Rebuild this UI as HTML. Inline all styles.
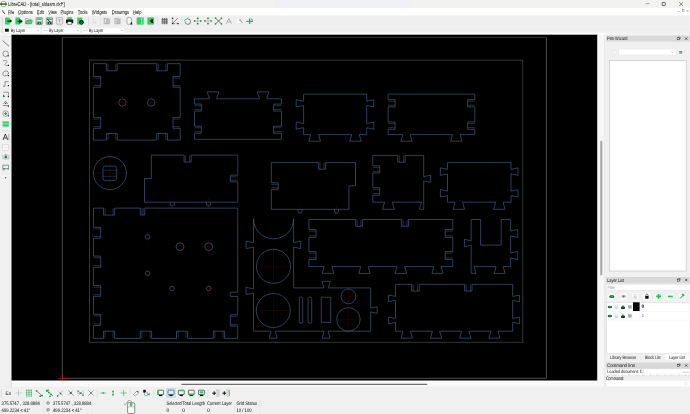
<!DOCTYPE html>
<html><head><meta charset="utf-8"><title>LibreCAD</title>
<style>
html,body{margin:0;padding:0;background:#f0f0f0;width:690px;height:414px;overflow:hidden}
svg{display:block;font-family:"Liberation Sans",sans-serif;text-rendering:geometricPrecision}
body{will-change:transform;transform:translateZ(0)}
</style></head>
<body>
<svg width="690" height="414" viewBox="0 0 690 414">
<defs><linearGradient id="tb" x1="0" x2="1" y1="0" y2="0"><stop offset="0" stop-color="#f6f6fa"/><stop offset="0.55" stop-color="#f3f3f6"/><stop offset="1" stop-color="#efefef"/></linearGradient></defs>
<rect x="0" y="0" width="690" height="414" fill="#f0f0f0" />
<rect x="0" y="0" width="690" height="7.9" fill="#f2f2f0" />
<rect x="275" y="0" width="137" height="7.9" fill="#eef0f6" />
<rect x="1.1" y="1.6" width="4.9" height="4.9" rx="1.5" fill="#fdfdfd" stroke="#72cf22" stroke-width="1.0"/>
<rect x="0.2" y="3.4" width="6.5" height="1.4" fill="#2a2a42" />
<rect x="2.6" y="3.5" width="1.9" height="1.2" fill="#8088a4" />
<text x="8.1" y="6.0" font-size="5.59" fill="#111" stroke="#111" stroke-width="0.02" textLength="56.6" lengthAdjust="spacingAndGlyphs" >LibreCAD - [total_sldasm.dxf*]</text>
<line x1="645.6" y1="3.6" x2="649.4" y2="3.6" stroke="#333" stroke-width="0.4" />
<rect x="662.2" y="2.4" width="3.2" height="3.2" rx="0.8" fill="none" stroke="#222" stroke-width="0.7"/>
<path d="M679.2,2.2 L683,6 M683,2.2 L679.2,6" stroke="#222" stroke-width="0.5" fill="none"/>
<rect x="0" y="7.9" width="690" height="7.7" fill="#ffffff" />
<path d="M3.2,10.0 A1.9,1.9 0 1 0 2.4,13.2" fill="none" stroke="#d0d0d0" stroke-width="0.5"/>
<path d="M2.8,10.7 C3.0,12.2 3.6,13.0 4.7,13.5" fill="none" stroke="#111" stroke-width="0.95" stroke-linecap="round"/>
<text x="8.0" y="13.8" font-size="5.47" fill="#000" stroke="#000" stroke-width="0.02" textLength="6.1" lengthAdjust="spacingAndGlyphs" >File</text>
<line x1="8.0" y1="14.6" x2="10.4" y2="14.6" stroke="#333" stroke-width="0.35" />
<text x="18.0" y="13.8" font-size="5.47" fill="#000" stroke="#000" stroke-width="0.02" textLength="15.0" lengthAdjust="spacingAndGlyphs" >Options</text>
<line x1="18.0" y1="14.6" x2="20.4" y2="14.6" stroke="#333" stroke-width="0.35" />
<text x="37.0" y="13.8" font-size="5.47" fill="#000" stroke="#000" stroke-width="0.02" textLength="6.9" lengthAdjust="spacingAndGlyphs" >Edit</text>
<line x1="37.0" y1="14.6" x2="39.4" y2="14.6" stroke="#333" stroke-width="0.35" />
<text x="48.3" y="13.8" font-size="5.47" fill="#000" stroke="#000" stroke-width="0.02" textLength="8.7" lengthAdjust="spacingAndGlyphs" >View</text>
<line x1="48.3" y1="14.6" x2="50.699999999999996" y2="14.6" stroke="#333" stroke-width="0.35" />
<text x="60.6" y="13.8" font-size="5.47" fill="#000" stroke="#000" stroke-width="0.02" textLength="12.9" lengthAdjust="spacingAndGlyphs" >Plugins</text>
<line x1="60.6" y1="14.6" x2="63.0" y2="14.6" stroke="#333" stroke-width="0.35" />
<text x="77.8" y="13.8" font-size="5.47" fill="#000" stroke="#000" stroke-width="0.02" textLength="9.8" lengthAdjust="spacingAndGlyphs" >Tools</text>
<line x1="77.8" y1="14.6" x2="80.2" y2="14.6" stroke="#333" stroke-width="0.35" />
<text x="91.8" y="13.8" font-size="5.47" fill="#000" stroke="#000" stroke-width="0.02" textLength="15.4" lengthAdjust="spacingAndGlyphs" >Widgets</text>
<line x1="91.8" y1="14.6" x2="94.2" y2="14.6" stroke="#333" stroke-width="0.35" />
<text x="111.8" y="13.8" font-size="5.47" fill="#000" stroke="#000" stroke-width="0.02" textLength="17.4" lengthAdjust="spacingAndGlyphs" >Drawings</text>
<line x1="111.8" y1="14.6" x2="114.2" y2="14.6" stroke="#333" stroke-width="0.35" />
<text x="133.1" y="13.8" font-size="5.47" fill="#000" stroke="#000" stroke-width="0.02" textLength="8.4" lengthAdjust="spacingAndGlyphs" >Help</text>
<line x1="133.1" y1="14.6" x2="135.5" y2="14.6" stroke="#333" stroke-width="0.35" />
<line x1="677.6" y1="11.6" x2="679.6" y2="11.6" stroke="#4a6a9a" stroke-width="0.4" />
<rect x="682.2" y="9.6" width="1.8" height="1.8" fill="none" stroke="#4a6a9a" stroke-width="0.4"/>
<path d="M686.6,10 L688.6,12 M688.6,10 L686.6,12" stroke="#4a6a9a" stroke-width="0.4"/>
<rect x="0" y="15.6" width="690" height="10.4" fill="#efefef" />
<rect x="0" y="25.7" width="690" height="0.7" fill="#e6e6e6" />
<rect x="0" y="26.4" width="690" height="0.6" fill="#f7f7f7" />
<line x1="2.2" y1="17" x2="2.2" y2="25" stroke="#c8c8c8" stroke-width="0.5" />
<rect x="5.0" y="17.5" width="4.7" height="7.1" fill="#14e05a" rx="0.4"/>
<path d="M7.4,20.4 H9.8 V19.2 L12.2,21.1 L9.8,23 V21.8 H7.4 Z" fill="#111"/>
<rect x="15.4" y="17.5" width="4.4" height="7.1" fill="#14e05a" rx="0.4"/>
<path d="M17.6,21.4 H22.2 M19.9,19.3 V23.5" stroke="#111" stroke-width="1.3"/>
<path d="M20.6,19.6 L22.6,21.4 L20.6,23.2 Z" fill="#111"/>
<path d="M25.6,18.6 H27.8 L28.4,19.4 H31.2 V20.6 H26.6 L25.6,23.6 Z" fill="#fafafa" stroke="#2a6a3a" stroke-width="0.45"/>
<path d="M26.9,20.7 H32.6 L31.2,23.9 H25.7 Z" fill="#35e878" stroke="#1a6a32" stroke-width="0.4"/>
<rect x="36.1" y="17.7" width="6.2" height="6.9" fill="#f2f2f2" rx="0.6" stroke="#444" stroke-width="0.5"/>
<rect x="36.7" y="18.3" width="5.0" height="1.8" fill="#14e05a" />
<rect x="36.7" y="21.4" width="5.0" height="2.7" fill="#14e05a" />
<rect x="37.7" y="22.2" width="3.0" height="2.0" fill="#2a2a2a" />
<rect x="38.900000000000006" y="22.5" width="0.8" height="1.5" fill="#e8e8e8" />
<rect x="46.3" y="17.7" width="6.2" height="6.9" fill="#f2f2f2" rx="0.6" stroke="#444" stroke-width="0.5"/>
<rect x="46.9" y="18.3" width="5.0" height="1.8" fill="#14e05a" />
<rect x="46.9" y="21.4" width="5.0" height="2.7" fill="#14e05a" />
<rect x="47.9" y="22.2" width="3.0" height="2.0" fill="#2a2a2a" />
<rect x="49.1" y="22.5" width="0.8" height="1.5" fill="#e8e8e8" />
<path d="M47.2,18.8 L51.6,23.4" stroke="#1b1b1b" stroke-width="1.0"/>
<rect x="56.4" y="17.6" width="6.2" height="6.6" fill="#f4f4f4" rx="0.6" stroke="#777" stroke-width="0.45"/>
<line x1="57.4" y1="19.4" x2="61.6" y2="19.4" stroke="#888" stroke-width="0.5" />
<line x1="57.4" y1="21.0" x2="61.6" y2="21.0" stroke="#aaa" stroke-width="0.5" />
<line x1="59.5" y1="19.4" x2="59.5" y2="23.4" stroke="#888" stroke-width="0.5" />
<rect x="67.4" y="17.2" width="4.4" height="2.6" fill="#14e05a" />
<rect x="66.0" y="19.6" width="7.2" height="3.6" fill="#111" rx="0.6"/>
<rect x="67.4" y="21.8" width="4.4" height="2.6" fill="#f2f2f2" stroke="#111" stroke-width="0.4"/>
<rect x="77.2" y="17.4" width="5.0" height="7.2" fill="#14e05a" rx="0.4"/>
<circle cx="81.4" cy="22.3" r="2.4" fill="#111"/>
<path d="M81.4,20.9 V23.4 M80.3,22.4 L81.4,23.6 L82.5,22.4" stroke="#14e05a" stroke-width="0.6" fill="none"/>
<line x1="88.6" y1="17" x2="88.6" y2="25" stroke="#d0d0d0" stroke-width="0.5" />
<path d="M93.4,19.0 L93.4,22.8 L94.4,22.0 L95.1,23.6 L95.7,23.3 L95.0,21.8 L96.2,21.7 Z" fill="#fbfbfb" stroke="#b4b4b4" stroke-width="0.3"/>
<line x1="100.6" y1="17" x2="100.6" y2="25" stroke="#d6d6d6" stroke-width="0.5" />
<rect x="103.3" y="17.7" width="7.0" height="6.8" fill="#d4d4d4" rx="0.5"/>
<rect x="104.39999999999999" y="18.6" width="3.2" height="4.6" fill="#e2e2e2" stroke="#9c9c9c" stroke-width="0.4"/>
<rect x="106.2" y="19.8" width="3.0" height="3.8" fill="#c2c2c2" stroke="#9c9c9c" stroke-width="0.4"/>
<rect x="114.0" y="17.7" width="7.0" height="6.8" fill="#d4d4d4" rx="0.5"/>
<rect x="115.1" y="18.6" width="3.2" height="4.6" fill="#e2e2e2" stroke="#9c9c9c" stroke-width="0.4"/>
<rect x="116.9" y="19.8" width="3.0" height="3.8" fill="#c2c2c2" stroke="#9c9c9c" stroke-width="0.4"/>
<rect x="127.0" y="17.7" width="4.4" height="6.4" fill="#fdfdfd" rx="0.5" stroke="#555" stroke-width="0.45"/>
<path d="M130.2,24.4 L131.4,21.4 L132.6,24.4 Z" fill="#222"/>
<rect x="136.8" y="17.6" width="6.8" height="6.8" fill="#14e05a" rx="0.4" stroke="#c08a9a" stroke-width="0.3"/>
<rect x="141.0" y="18.2" width="1.1" height="5.4" fill="#f2f2f2" />
<rect x="147.4" y="17.6" width="6.6" height="6.8" fill="#14e05a" rx="0.4" stroke="#c08a9a" stroke-width="0.3"/>
<path d="M152.2,19.0 L149.6,21.0 L152.2,23.0 Z" fill="#111"/>
<rect x="151.6" y="19.0" width="1.4" height="4.0" fill="#222" />
<line x1="157.6" y1="17" x2="157.6" y2="25" stroke="#d6d6d6" stroke-width="0.5" />
<path d="M161.4,19.3 H168 M161.4,21.1 H168 M161.4,22.9 H168 M162.8,17.9 V24.3 M164.7,17.9 V24.3 M166.6,17.9 V24.3" stroke="#2a2a2a" stroke-width="0.6"/>
<path d="M172.6,18.2 V23.6 M172.6,23.6 H178.2" stroke="#222" stroke-width="0.5" stroke-dasharray="0.9 0.6" fill="none"/>
<path d="M172.8,23.2 L177.8,18.2" stroke="#1fb860" stroke-width="0.9"/>
<rect x="171.9" y="22.9" width="1.3" height="1.3" fill="#222" />
<rect x="177.4" y="22.9" width="1.3" height="1.3" fill="#222" />
<rect x="171.9" y="17.6" width="1.3" height="1.3" fill="#222" />
<line x1="181.8" y1="17" x2="181.8" y2="25" stroke="#d6d6d6" stroke-width="0.5" />
<path d="M185.2,21.4 A2.7,2.7 0 1 0 187.8,19.0" stroke="#333" stroke-width="0.55" fill="none"/>
<path d="M184.2,20.6 L188.4,17.6" stroke="#1fb860" stroke-width="0.9"/>
<path d="M195.1,21 H200.29999999999998 M197.7,18.4 V23.6" stroke="#9a9a9a" stroke-width="0.5"/>
<rect x="196.95" y="17.55" width="1.5" height="1.5" fill="#0a8a3a" />
<rect x="196.95" y="22.95" width="1.5" height="1.5" fill="#0a8a3a" />
<rect x="193.95" y="20.25" width="1.5" height="1.5" fill="#0a8a3a" />
<rect x="199.95" y="20.25" width="1.5" height="1.5" fill="#0a8a3a" />
<path d="M205.4,21 H210.6 M208.0,18.4 V23.6" stroke="#9a9a9a" stroke-width="0.5"/>
<rect x="207.25" y="17.55" width="1.5" height="1.5" fill="#0a8a3a" />
<rect x="207.25" y="22.95" width="1.5" height="1.5" fill="#0a8a3a" />
<rect x="204.25" y="20.25" width="1.5" height="1.5" fill="#0a8a3a" />
<rect x="210.25" y="20.25" width="1.5" height="1.5" fill="#0a8a3a" />
<path d="M215.8,18.4 L221.2,23.6 M221.2,18.4 L215.8,23.6" stroke="#222" stroke-width="0.6"/>
<rect x="214.8" y="17.4" width="1.4" height="1.4" fill="#0a8a3a" />
<rect x="220.8" y="17.4" width="1.4" height="1.4" fill="#0a8a3a" />
<rect x="214.8" y="23.2" width="1.4" height="1.4" fill="#0a8a3a" />
<rect x="220.8" y="23.2" width="1.4" height="1.4" fill="#0a8a3a" />
<path d="M226.2,23.6 L228.9,18.6 L231.6,23.6 M227.8,21.4 L228.9,22.6 L230,21.4" stroke="#6a6a6a" stroke-width="0.5" fill="none"/>
<rect x="236.2" y="18.2" width="5.2" height="5.2" fill="#fdfdfd" stroke="#dadada" stroke-width="0.35"/>
<path d="M239.6,19.6 L242.4,22.8 M240.6,19.2 L239.2,20.6" stroke="#333" stroke-width="0.5"/>
<path d="M246.4,21.4 H253 M249.6,18.4 V24" stroke="#1fb860" stroke-width="1.3"/>
<path d="M250.8,18.6 L252.8,20.2" stroke="#222" stroke-width="0.6"/>
<rect x="0" y="27.0" width="690" height="5.8" fill="#efefef" />
<rect x="0" y="32.7" width="605" height="2.0" fill="#fdfdfd" />
<rect x="605" y="32.7" width="85" height="2.0" fill="#f3f3f3" />
<line x1="2.2" y1="27.6" x2="2.2" y2="33.4" stroke="#c8c8c8" stroke-width="0.5" />
<rect x="3.6" y="27.5" width="37.199999999999996" height="5.7" fill="#ffffff" stroke="#e4e4e4" stroke-width="0.4"/>
<path d="M37.199999999999996,29.9 L38.3,31 L39.4,29.9" stroke="#8a8a8a" stroke-width="0.4" fill="none"/>
<rect x="41.9" y="27.5" width="38.50000000000001" height="5.7" fill="#ffffff" stroke="#e4e4e4" stroke-width="0.4"/>
<path d="M76.80000000000001,29.9 L77.9,31 L79.0,29.9" stroke="#8a8a8a" stroke-width="0.4" fill="none"/>
<rect x="81.6" y="27.5" width="43.0" height="5.7" fill="#ffffff" stroke="#e4e4e4" stroke-width="0.4"/>
<path d="M121.0,29.9 L122.1,31 L123.19999999999999,29.9" stroke="#8a8a8a" stroke-width="0.4" fill="none"/>
<rect x="5.0" y="28.7" width="3.8" height="3.0" fill="#111" />
<text x="10.8" y="31.9" font-size="4.9" fill="#1a1a1a" stroke="#1a1a1a" stroke-width="0.02" textLength="14.4" lengthAdjust="spacingAndGlyphs" >By Layer</text>
<line x1="43.6" y1="30.4" x2="47.6" y2="30.4" stroke="#888" stroke-width="0.4" />
<text x="49.0" y="31.9" font-size="4.9" fill="#1a1a1a" stroke="#1a1a1a" stroke-width="0.02" textLength="14.4" lengthAdjust="spacingAndGlyphs" >By Layer</text>
<line x1="83.2" y1="30.4" x2="87.2" y2="30.4" stroke="#888" stroke-width="0.4" />
<text x="88.8" y="31.9" font-size="4.9" fill="#1a1a1a" stroke="#1a1a1a" stroke-width="0.02" textLength="14.4" lengthAdjust="spacingAndGlyphs" >By Layer</text>
<rect x="11.3" y="34.7" width="586.3" height="346.1" fill="#000" />
<g fill="none" stroke="#6a6a6a" stroke-width="0.7">
<path d="M62.3,37.4 V378.3 H546.4 V37.4"/>
<path d="M62.3,37.3 H546.4" stroke-opacity="0.7"/>
</g>
<g fill="none" stroke="#4c4c4c" stroke-width="0.7">
<rect x="89.4" y="60.1" width="433.4" height="282.1"/>
</g>
<line x1="58" y1="378.3" x2="67" y2="378.3" stroke="#d01010" stroke-width="0.7" />
<line x1="62.3" y1="374" x2="62.3" y2="381" stroke="#d01010" stroke-width="0.7" />
<g fill="none" stroke="#420808" stroke-width="0.4">
<path d="M116.4,102.5 H128.4 M122.4,96.5 V108.5"/>
<path d="M145.2,102.5 H157.2 M151.2,96.5 V108.5"/>
<path d="M91.4,173.1 H128.4 M109.9,154.6 V191.6"/>
<path d="M143.1,236.9 H152.1 M147.6,232.4 V241.4"/>
<path d="M143.1,273.3 H152.1 M147.6,268.8 V277.8"/>
<path d="M167.6,288.5 H176.6 M172.1,284.0 V293.0"/>
<path d="M204.2,288.5 H213.2 M208.7,284.0 V293.0"/>
<path d="M173.5,246.7 H186.5 M180,240.2 V253.2"/>
<path d="M202.2,246.7 H215.2 M208.7,240.2 V253.2"/>
<path d="M254.5,266.3 H292.5 M273.5,247.3 V285.3"/>
<path d="M254.3,310.5 H292.3 M273.3,291.5 V329.5"/>
<path d="M338.9,296.4 H357.9 M348.4,286.9 V305.9"/>
<path d="M334.4,319.4 H362.4 M348.4,305.4 V333.4"/>
<path d="M172.2,198.2 V208.2"/>
<path d="M208.6,198.2 V208.2"/>
<path d="M300.1,205.3 V215.3"/>
<path d="M336.5,205.3 V215.3"/>
</g>
<g fill="none" stroke="#44668f" stroke-width="0.62" stroke-linejoin="round">
<path d="M93.5,63.65 H106.4 V70.8 H117.3 V63.65 H156.7 V70.8 H167.4 V63.65 H180.2 V76.4 H173 V87.2 H180.2 V117.4 H173 V128.3 H180.2 V140.1 H167.4 V133.5 H156.7 V140.1 H117.3 V133.5 H106.4 V140.1 H93.5 V128.3 H100.7 V117.4 H93.5 V87.2 H100.7 V76.4 H93.5 Z"/>
<path d="M194.5,98.8 H209.6 L207.1,91.9 H219 L216.5,98.8 H259.5 L257.2,91.9 H268.9 L266.6,98.8 H281.5 V104.1 H273.6 V111.1 H281.5 V126.2 H273.6 V133.3 H281.5 V139.3 H194.5 V133.3 H201.4 V126.2 H194.5 V111.1 H201.4 V104.1 H194.5 Z"/>
<path d="M303.6,94.1 H366.7 V101.3 L373.8,99.8 V106.9 L366.7,105.4 V123.5 L373.8,122 V129.2 L366.7,127.7 V134.6 H359.3 L361.2,141.2 H349.7 L351.8,134.6 H318.6 L320.5,141.2 H308.8 L310.7,134.6 H303.6 V127.7 L296.2,129.2 V122 L303.6,123.5 V105.4 L296.2,106.9 V99.8 L303.6,101.3 Z"/>
<path d="M388.1,94.1 H474.8 V99.6 H467.6 V106.9 H474.8 V122 H467.6 V129.3 H474.8 V134.6 H460.1 L462,141.2 H450.7 L452.5,134.6 H410.1 L412,141.2 H400.7 L403,134.6 H388.1 V129.3 H395.1 V122 H388.1 V106.9 H395.1 V99.6 H388.1 Z"/>
<path d="M151.3,155.1 H184.1 V162 H191.2 V155.1 H237.8 V175.2 H230.4 V181.8 H237.8 V202.2 H144.5 V178.6 H151.3 Z"/>
<path d="M271.3,162.6 H318.4 V169.2 H325.7 V162.6 H355.5 V185.8 H348.9 V209.3 H271.3 V189.4 H278.3 V182.8 H271.3 Z"/>
<path d="M372.8,155.4 H397.7 V162.2 H405.2 V155.4 H423.7 V176.7 L430.7,175.2 V182.4 L423.7,180.9 V209.3 H419.5 L421.4,202.2 H392.4 L394.3,209.3 H382.6 L384.5,202.2 H372.8 V195.2 H379.8 V187.7 H372.8 V173 H379.8 V165.8 H372.8 Z"/>
<path d="M447.5,162.6 H511 V169.4 L518,167.9 V175.4 L511,173.9 V191.1 L518,189.6 V197.1 L511,195.6 V202.2 H503.1 L505,209.3 H493.7 L495.6,202.2 H462.6 L464.5,209.3 H453.2 L455.1,202.2 H447.5 V195.6 L440.4,197.1 V189.6 L447.5,191.1 V173.9 L440.4,175.4 V167.9 L447.5,169.4 Z"/>
<path d="M93.5,208.1 H103.5 V215.1 H114.6 V208.1 H140.3 V215.1 H144.8 V208.1 H237.7 V292.2 H230.3 V296.4 H237.7 V314.7 H230.3 V326 H237.7 V338.4 H224.6 V331.2 H213.3 V338.4 H187.6 V331.2 H176.5 V338.4 H151.6 V331.2 H140.3 V338.4 H114.6 V331.2 H103.5 V338.4 H93.5 V325.6 H100.7 V314.3 H93.5 V296.4 H100.7 V285.6 H93.5 V267.3 H100.7 V256.1 H93.5 V238.2 H100.7 V227.3 H93.5 Z"/>
<path d="M253.5,218.8 A20.05,20.05 0 0 0 293.6,218.8 V242.6 L300.6,241.1 V248.6 L293.6,247.1 V287.9 H323.9 L322.1,281.3 H330.2 L328.5,287.9 H370.7 V308.2 L377.2,306.7 V313.3 L370.7,311.8 V331.2 H328.2 L330.1,338.2 H322.2 L324.1,331.2 H275.3 L277.1,338.2 H269.2 L271.1,331.2 H253.5 V293 L246,294.5 V287.3 L253.5,288.8 V247.1 L246.1,248.6 V241.1 L253.5,242.6 Z"/>
<path d="M308.9,219.5 H355.6 V226.3 H362.6 V219.5 H401.4 V226.3 H408.6 V219.5 H452.8 V229.5 H445.2 V237.4 H452.8 V251.5 H445.2 V259.6 H452.8 V266.6 H441.1 L443,273.4 H432 L433.9,266.6 H404.6 L406.7,273.4 H395.1 L397,266.6 H368.2 L370.1,273.4 H358.8 L360.7,266.6 H332 L333.9,273.4 H322.2 L324.1,266.6 H308.9 V259.6 H316 V251.5 H308.9 V237.4 H316 V229.5 H308.9 Z"/>
<path d="M471.2,219.5 H480.6 V245.1 H501.2 V219.5 H510.6 V231 L517.8,229.5 V237.4 L510.6,235.9 V253 L517.8,251.5 V259.6 L510.6,258.1 V266.6 H503.2 L505.1,273.4 H494.2 L496.1,266.6 H474 L475.9,273.4 H471.2 V245.3 L464.4,246.8 V239.3 L471.2,240.8 Z"/>
<path d="M395.5,284.3 H411.6 V291.1 H419.3 V284.3 H464.6 V291.1 H472 V284.3 H512.7 V296.4 L519.6,295.1 V301.7 L512.7,300.4 V318.4 L519.6,317.1 V323.7 L512.7,322.4 V331.2 H498 L499.9,338.2 H488.9 L491,331.2 H468.8 L471,338.2 H459.7 L461.6,331.2 H439.6 L441.8,338.2 H430.5 L432.4,331.2 H410.5 L412.5,338.2 H401.1 L402.9,331.2 H395.5 V322.4 L388.6,323.7 V317.1 L395.5,318.4 V300.4 L388.6,301.7 V295.1 L395.5,296.4 Z"/>
<path d="M170.2,202.2 V204.0 A2,2 0 0 0 174.2,204.0 V202.2"/>
<path d="M206.6,202.2 V204.0 A2,2 0 0 0 210.6,204.0 V202.2"/>
<path d="M298.1,209.3 V211.10000000000002 A2,2 0 0 0 302.1,211.10000000000002 V209.3"/>
<path d="M334.5,209.3 V211.10000000000002 A2,2 0 0 0 338.5,211.10000000000002 V209.3"/>
<path d="M93.5,78.0 H100.7 M93.5,85.60000000000001 H100.7 M180.2,78.0 H173 M180.2,85.60000000000001 H173 M93.5,119.0 H100.7 M93.5,126.70000000000002 H100.7 M180.2,119.0 H173 M180.2,126.70000000000002 H173 M108.0,63.65 V70.8 M115.7,63.65 V70.8 M108.0,140.1 V133.5 M115.7,140.1 V133.5 M158.29999999999998,63.65 V70.8 M165.8,63.65 V70.8 M158.29999999999998,140.1 V133.5 M165.8,140.1 V133.5 M194.5,105.69999999999999 H201.4 M194.5,109.5 H201.4 M281.5,105.69999999999999 H273.6 M281.5,109.5 H273.6 M194.5,127.8 H201.4 M194.5,131.70000000000002 H201.4 M281.5,127.8 H273.6 M281.5,131.70000000000002 H273.6 M388.1,101.19999999999999 H395.1 M388.1,105.30000000000001 H395.1 M474.8,101.19999999999999 H467.6 M474.8,105.30000000000001 H467.6 M388.1,123.6 H395.1 M388.1,127.70000000000002 H395.1 M474.8,123.6 H467.6 M474.8,127.70000000000002 H467.6 M185.7,155.1 V162 M189.6,155.1 V162 M237.8,176.79999999999998 H230.4 M237.8,180.20000000000002 H230.4 M320.0,162.6 V169.2 M324.09999999999997,162.6 V169.2 M271.3,184.4 H278.3 M271.3,187.8 H278.3 M399.3,155.4 V162.2 M403.59999999999997,155.4 V162.2 M372.8,167.4 H379.8 M372.8,171.4 H379.8 M372.8,189.29999999999998 H379.8 M372.8,193.6 H379.8 M93.5,228.9 H100.7 M93.5,236.6 H100.7 M93.5,257.70000000000005 H100.7 M93.5,265.7 H100.7 M93.5,287.20000000000005 H100.7 M93.5,294.79999999999995 H100.7 M93.5,315.90000000000003 H100.7 M93.5,324.0 H100.7 M237.7,316.3 H230.3 M237.7,324.4 H230.3 M105.1,208.1 V215.1 M113.0,208.1 V215.1 M141.9,208.1 V215.1 M143.20000000000002,208.1 V215.1 M105.1,338.4 V331.2 M113.0,338.4 V331.2 M141.9,338.4 V331.2 M150.0,338.4 V331.2 M178.1,338.4 V331.2 M186.0,338.4 V331.2 M214.9,338.4 V331.2 M223.0,338.4 V331.2 M308.9,231.1 H316 M308.9,235.8 H316 M452.8,231.1 H445.2 M452.8,235.8 H445.2 M308.9,253.1 H316 M308.9,258.0 H316 M452.8,253.1 H445.2 M452.8,258.0 H445.2 M357.20000000000005,219.5 V226.3 M361.0,219.5 V226.3 M403.0,219.5 V226.3 M407.0,219.5 V226.3 M413.20000000000005,284.3 V291.1 M417.7,284.3 V291.1 M466.20000000000005,284.3 V291.1 M470.4,284.3 V291.1" stroke-opacity="0.75"/>
<circle cx="122.4" cy="102.5" r="3.7"/>
<circle cx="151.2" cy="102.5" r="3.7"/>
<circle cx="109.9" cy="173.1" r="16.5"/>
<circle cx="147.6" cy="236.9" r="2.3"/>
<circle cx="147.6" cy="273.3" r="2.3"/>
<circle cx="172.1" cy="288.5" r="2.3"/>
<circle cx="208.7" cy="288.5" r="2.3"/>
<circle cx="180" cy="246.7" r="3.9"/>
<circle cx="208.7" cy="246.7" r="3.9"/>
<circle cx="273.5" cy="266.3" r="17.05"/>
<circle cx="273.3" cy="310.5" r="17.0"/>
<circle cx="348.4" cy="296.4" r="7.4"/>
<circle cx="348.4" cy="319.4" r="11.8"/>
<rect x="103" y="166.1" width="13.7" height="14.5" rx="2.2"/>
<path d="M103,170.3 H116.7 M103,176.3 H116.7" stroke-opacity="0.6"/>
<rect x="299.3" y="296.9" width="3.4" height="26.4" rx="1.7"/>
<rect x="308.1" y="296.9" width="3.6" height="26.4" rx="1.7"/>
<rect x="321.3" y="297.3" width="9.4" height="25.1"/>
</g>
<rect x="0" y="34.6" width="11.3" height="352.6" fill="#f0f0f0" />
<line x1="2" y1="36.6" x2="9.6" y2="36.6" stroke="#cfcfcf" stroke-width="0.4" />
<path d="M2.6,40.6 L9,46.2" stroke="#222" stroke-width="0.55"/>
<circle cx="5.6" cy="53.8" r="2.8" fill="none" stroke="#444" stroke-width="0.5"/>
<rect x="7.6" y="55.2" width="1.2" height="1.2" fill="#222" />
<path d="M3,61 C6,59.6 8.6,61 6,63 C3.6,64.8 6,66.4 8.6,65.2" fill="none" stroke="#444" stroke-width="0.5"/>
<rect x="7.8" y="64.8" width="1.2" height="1.2" fill="#222" />
<ellipse cx="5.6" cy="73.4" rx="3" ry="2.3" fill="none" stroke="#444" stroke-width="0.5" transform="rotate(-25 5.6 73.4)"/>
<rect x="7.8" y="75.0" width="1.2" height="1.2" fill="#222" />
<path d="M3,86.4 H5 V81.6 H8.6" fill="none" stroke="#444" stroke-width="0.55"/>
<rect x="7.8" y="85.0" width="1.2" height="1.2" fill="#222" />
<path d="M3.2,92.2 H8.4 V96.4" fill="none" stroke="#444" stroke-width="0.5"/>
<path d="M3,94.4 L5.4,96.6 L3,97.2 Z" fill="#0a8a3a"/>
<rect x="7.8" y="96.0" width="1.2" height="1.2" fill="#222" />
<path d="M2.8,105.6 H8.6 M3.4,104 L5.6,101.2 L7.8,104" fill="none" stroke="#333" stroke-width="0.5"/>
<rect x="5.0" y="102.8" width="1.3" height="1.3" fill="#0a8a3a" />
<rect x="7.8" y="105.6" width="1.2" height="1.2" fill="#222" />
<circle cx="5.6" cy="113.6" r="2.8" fill="none" stroke="#555" stroke-width="0.5"/>
<path d="M4.2,113.6 H7 M5.6,112.2 V115" stroke="#0a8a3a" stroke-width="0.9"/>
<rect x="7.8" y="115.2" width="1.2" height="1.2" fill="#222" />
<rect x="2.6" y="121.4" width="6.2" height="1.7" fill="#14e05a" />
<rect x="2.6" y="124.4" width="6.2" height="2.2" fill="#14e05a" />
<line x1="2.6" y1="123.8" x2="8.8" y2="123.8" stroke="#1a5a2a" stroke-width="0.4" />
<line x1="2" y1="130.8" x2="9.6" y2="130.8" stroke="#cfcfcf" stroke-width="0.4" />
<path d="M3,140 L5.4,134 L7.8,140 M3.9,138 H6.9" fill="none" stroke="#111" stroke-width="0.75"/>
<line x1="8.8" y1="133.8" x2="8.8" y2="140.2" stroke="#555" stroke-width="0.4" />
<rect x="2.8" y="144.6" width="5.8" height="5.6" fill="#fbfbfb" stroke="#bdbdbd" stroke-width="0.4"/>
<path d="M2.8,147.4 H8.6 M5.7,144.6 V150.2" stroke="#dcdcdc" stroke-width="0.4"/>
<rect x="2.8" y="155.2" width="6.0" height="3.8" fill="#e6e6e6" rx="0.5" stroke="#8a8a8a" stroke-width="0.4"/>
<circle cx="5.8" cy="157.1" r="1.3" fill="#0a8a3a"/>
<rect x="4.8" y="154.4" width="2" height="0.9" fill="#9a9a9a" />
<path d="M2.8,165.2 H8.6 V168.6 H2.8 Z" fill="none" stroke="#333" stroke-width="0.5"/>
<circle cx="3.8" cy="169.4" r="0.9" fill="none" stroke="#333" stroke-width="0.4"/>
<rect x="7.4" y="168.2" width="1.6" height="1.6" fill="#14e05a" />
<circle cx="5.6" cy="177.8" r="0.75" fill="#0a8a3a"/>
<rect x="597.6" y="35" width="7.0" height="352.2" fill="#f6f6f6" />
<rect x="597.6" y="35" width="1.0" height="346.4" fill="#ffffff" />
<rect x="600.3" y="140.8" width="2.0" height="134.5" fill="#a6a6a6" rx="0.9"/>
<line x1="604.7" y1="35" x2="604.7" y2="387.2" stroke="#dddddd" stroke-width="0.5" />
<rect x="11.3" y="380.8" width="593" height="6.4" fill="#f8f8f8" />
<rect x="11.3" y="380.8" width="587.3" height="1.3" fill="#ffffff" />
<rect x="181.3" y="383.8" width="246.0" height="1.1" fill="#6e6e6e" rx="0.5"/>
<line x1="0" y1="387.3" x2="605" y2="387.3" stroke="#e4e4e4" stroke-width="0.4" />
<line x1="11.5" y1="381.4" x2="11.5" y2="387.2" stroke="#cccccc" stroke-width="0.5" />
<rect x="605.2" y="35" width="84.79999999999995" height="352.2" fill="#f0f0f0" />
<line x1="606.0" y1="277" x2="606.0" y2="387" stroke="#d8d8d8" stroke-width="0.4" />
<rect x="606.0" y="35.6" width="84" height="6.0" fill="#d9d9d9" />
<text x="607.0" y="39.9" font-size="4.9" fill="#1a1a1a" stroke="#1a1a1a" stroke-width="0.02" textLength="20.4" lengthAdjust="spacingAndGlyphs" >Pen Wizard</text>
<rect x="677.2" y="37.800000000000004" width="2.2" height="2.0" fill="none" stroke="#222" stroke-width="0.45"/>
<path d="M678.0,37.800000000000004 V37.1 H680.2 V39.0 H679.4" fill="none" stroke="#222" stroke-width="0.4"/>
<path d="M685.0,37.4 L687.4,39.800000000000004 M687.4,37.4 L685.0,39.800000000000004" stroke="#111" stroke-width="0.55"/>
<rect x="612.4" y="50.4" width="3.6" height="3.6" fill="#fdfdfd" rx="0.6" stroke="#dadada" stroke-width="0.4"/>
<line x1="614.2" y1="51.4" x2="614.2" y2="53.2" stroke="#cfcfcf" stroke-width="0.3" />
<rect x="618.8" y="49.0" width="57.2" height="6.0" fill="#ffffff" stroke="#e2e2e2" stroke-width="0.4"/>
<path d="M671.4,51.4 L672.6,52.6 L673.8,51.4" stroke="#8a8a8a" stroke-width="0.4" fill="none"/>
<rect x="679.2" y="51.0" width="1.6" height="1.4" fill="#e04a3a" />
<rect x="680.8" y="51.0" width="1.4" height="1.4" fill="#3a9ae0" />
<rect x="679.2" y="52.4" width="3.0" height="1.2" fill="#3ac04a" />
<rect x="609.6" y="60.6" width="76.6" height="210.4" fill="#ffffff" stroke="#c8c8c8" stroke-width="0.7"/>
<rect x="606.0" y="277.0" width="84" height="6.5" fill="#d9d9d9" />
<text x="607.0" y="281.8" font-size="4.9" fill="#1a1a1a" stroke="#1a1a1a" stroke-width="0.02" textLength="17.2" lengthAdjust="spacingAndGlyphs" >Layer List</text>
<rect x="677.2" y="279.2" width="2.2" height="2.0" fill="none" stroke="#222" stroke-width="0.45"/>
<path d="M678.0,279.2 V278.5 H680.2 V280.4 H679.4" fill="none" stroke="#222" stroke-width="0.4"/>
<path d="M685.0,278.8 L687.4,281.2 M687.4,278.8 L685.0,281.2" stroke="#111" stroke-width="0.55"/>
<rect x="606.4" y="284.5" width="83.6" height="5.6" fill="#ffffff" stroke="#e2e2e2" stroke-width="0.4"/>
<text x="607.4" y="288.9" font-size="4.56" fill="#a8a8a8" stroke="#a8a8a8" stroke-width="0.02" textLength="8.2" lengthAdjust="spacingAndGlyphs" >Filter</text>
<rect x="608.4" y="293.0" width="6.8" height="6.8" fill="#f8f8f8" rx="1"/>
<rect x="620.2" y="293.0" width="6.8" height="6.8" fill="#f8f8f8" rx="1"/>
<rect x="631.6" y="293.0" width="6.8" height="6.8" fill="#f8f8f8" rx="1"/>
<rect x="643.5" y="293.0" width="6.8" height="6.8" fill="#f8f8f8" rx="1"/>
<rect x="655.2" y="293.0" width="6.8" height="6.8" fill="#f8f8f8" rx="1"/>
<rect x="666.9" y="293.0" width="6.8" height="6.8" fill="#f8f8f8" rx="1"/>
<rect x="678.7" y="293.0" width="6.8" height="6.8" fill="#f8f8f8" rx="1"/>
<ellipse cx="611.8" cy="296.4" rx="2.6" ry="1.5" fill="#0c6a30"/>
<ellipse cx="611.8" cy="296.2" rx="1.4" ry="0.7" fill="#1fd060"/>
<ellipse cx="623.6" cy="296.4" rx="2.3400000000000003" ry="1.35" fill="#b8b8b8"/>
<circle cx="623.6" cy="296.4" r="0.8" fill="#666"/>
<path d="M633.9,296.20000000000005 V295.20000000000005 A1.1,1.1 0 0 1 636.1,295.20000000000005 V296.20000000000005" fill="none" stroke="#c8c8c8" stroke-width="0.5"/>
<rect x="633.3" y="296.1" width="3.4" height="2.7" fill="#d8d8d8" rx="0.3"/>
<path d="M645.8,296.20000000000005 V295.20000000000005 A1.1,1.1 0 0 1 648.0,295.20000000000005 V296.20000000000005" fill="none" stroke="#111" stroke-width="0.5"/>
<rect x="645.1999999999999" y="296.1" width="3.4" height="2.7" fill="#111" rx="0.3"/>
<path d="M656.2,296.4 H661 M658.6,294 V298.8" stroke="#18c850" stroke-width="1.7"/>
<path d="M667.8,296.4 H672.8" stroke="#18c850" stroke-width="1.5"/>
<path d="M680,298.6 L683.2,295.2" stroke="#222" stroke-width="0.7"/>
<path d="M681.4,294.2 L683.2,293.6 L684.6,295 L683.8,296.8 Z" fill="#18c850"/>
<rect x="606.5" y="302.3" width="83.5" height="51.2" fill="#ffffff" stroke="#d2d2d2" stroke-width="0.5"/>
<line x1="606.8" y1="311.6" x2="690" y2="311.6" stroke="#ececec" stroke-width="0.4" />
<line x1="606.8" y1="320.2" x2="690" y2="320.2" stroke="#ececec" stroke-width="0.4" />
<line x1="613.4" y1="302.6" x2="613.4" y2="320.2" stroke="#f0f0f0" stroke-width="0.4" />
<line x1="619.6" y1="302.6" x2="619.6" y2="320.2" stroke="#f0f0f0" stroke-width="0.4" />
<line x1="626.6" y1="302.6" x2="626.6" y2="320.2" stroke="#f0f0f0" stroke-width="0.4" />
<line x1="633.0" y1="302.6" x2="633.0" y2="320.2" stroke="#f0f0f0" stroke-width="0.4" />
<line x1="639.8" y1="302.6" x2="639.8" y2="320.2" stroke="#f0f0f0" stroke-width="0.4" />
<ellipse cx="609.9" cy="306.9" rx="2.21" ry="1.275" fill="#0c6a30"/>
<ellipse cx="609.9" cy="306.7" rx="1.1" ry="0.55" fill="#1fd060"/>
<path d="M615.3,306.7 V305.7 A1.1,1.1 0 0 1 617.5,305.7 V306.7" fill="none" stroke="#cfcfcf" stroke-width="0.5"/>
<rect x="614.6999999999999" y="306.59999999999997" width="3.4" height="2.7" fill="#dcdcdc" rx="0.3"/>
<path d="M621.2,307.29999999999995 L623,304.7 L624.8,307.29999999999995 Z" fill="#18c850"/>
<rect x="621.2" y="306.7" width="3.6" height="2.2" fill="#111" rx="0.5"/>
<rect x="622.4" y="307.29999999999995" width="1.2" height="1.0" fill="#18c850" />
<rect x="628.2" y="305.29999999999995" width="3.4" height="3.2" fill="#9a9a9a" />
<path d="M628.2,306.9 H631.6 M629.9,305.29999999999995 V308.5" stroke="#d8d8d8" stroke-width="0.35"/>
<ellipse cx="609.9" cy="315.9" rx="2.21" ry="1.275" fill="#0c6a30"/>
<ellipse cx="609.9" cy="315.7" rx="1.1" ry="0.55" fill="#1fd060"/>
<path d="M615.3,315.7 V314.7 A1.1,1.1 0 0 1 617.5,314.7 V315.7" fill="none" stroke="#cfcfcf" stroke-width="0.5"/>
<rect x="614.6999999999999" y="315.59999999999997" width="3.4" height="2.7" fill="#dcdcdc" rx="0.3"/>
<path d="M621.2,316.29999999999995 L623,313.7 L624.8,316.29999999999995 Z" fill="#18c850"/>
<rect x="621.2" y="315.7" width="3.6" height="2.2" fill="#111" rx="0.5"/>
<rect x="622.4" y="316.29999999999995" width="1.2" height="1.0" fill="#18c850" />
<rect x="628.2" y="314.29999999999995" width="3.4" height="3.2" fill="#9a9a9a" />
<path d="M628.2,315.9 H631.6 M629.9,314.29999999999995 V317.5" stroke="#d8d8d8" stroke-width="0.35"/>
<rect x="633.0" y="302.3" width="6.6" height="8.7" fill="#000" />
<text x="641.6" y="308.4" font-size="4.9" fill="#111" stroke="#111" stroke-width="0.02" font-weight="bold">0</text>
<text x="641.4" y="317.4" font-size="4.9" fill="#5a7aa8" stroke="#5a7aa8" stroke-width="0.02" >1</text>
<rect x="606.0" y="353.8" width="84" height="6.6" fill="#f0f0f0" />
<rect x="664.9" y="353.8" width="25.1" height="6.4" fill="#fafafa" />
<line x1="640.6" y1="354.4" x2="640.6" y2="360" stroke="#e2e2e2" stroke-width="0.4" />
<text x="609.9" y="358.8" font-size="4.79" fill="#222" stroke="#222" stroke-width="0.02" textLength="26.4" lengthAdjust="spacingAndGlyphs" >Library Browser</text>
<text x="645.0" y="358.8" font-size="4.79" fill="#222" stroke="#222" stroke-width="0.02" textLength="15.6" lengthAdjust="spacingAndGlyphs" >Block List</text>
<text x="669.0" y="358.8" font-size="4.79" fill="#222" stroke="#222" stroke-width="0.02" textLength="16.3" lengthAdjust="spacingAndGlyphs" >Layer List</text>
<rect x="606.0" y="362.5" width="84" height="6.3" fill="#d9d9d9" />
<text x="607.0" y="367.1" font-size="4.9" fill="#1a1a1a" stroke="#1a1a1a" stroke-width="0.02" textLength="28.0" lengthAdjust="spacingAndGlyphs" >Command line</text>
<rect x="677.2" y="364.7" width="2.2" height="2.0" fill="none" stroke="#222" stroke-width="0.45"/>
<path d="M678.0,364.7 V364.0 H680.2 V365.9 H679.4" fill="none" stroke="#222" stroke-width="0.4"/>
<path d="M685.0,364.3 L687.4,366.7 M687.4,364.3 L685.0,366.7" stroke="#111" stroke-width="0.55"/>
<rect x="606.4" y="369.3" width="83.6" height="5.8" fill="#ffffff" />
<text x="607.2" y="373.4" font-size="4.79" fill="#222" stroke="#222" stroke-width="0.02" textLength="36.5" lengthAdjust="spacingAndGlyphs" >Loaded document: C:</text>
<line x1="682.6" y1="372.2" x2="689.4" y2="372.2" stroke="#9a9a9a" stroke-width="0.5" />
<path d="M607.2,375.0 H689" stroke="#9a9a9a" stroke-width="0.5" stroke-dasharray="2.2 1.4 0.8 1.9 3 1.2 1.2 2.4" opacity="0.7"/>
<text x="605.9" y="379.7" font-size="4.9" fill="#111" stroke="#111" stroke-width="0.02" textLength="18.1" lengthAdjust="spacingAndGlyphs" >Command:</text>
<rect x="606.5" y="381.0" width="83.5" height="5.4" fill="#ffffff" />
<rect x="684.6" y="382.2" width="2.6" height="3.0" fill="#fafafa" rx="0.6" stroke="#dcdcdc" stroke-width="0.35"/>
<rect x="0" y="387.5" width="690" height="26.5" fill="#f0f0f0" />
<line x1="1.4" y1="389" x2="1.4" y2="397.6" stroke="#c8c8c8" stroke-width="0.5" />
<text x="5.6" y="394.6" font-size="5.24" fill="#111" stroke="#111" stroke-width="0.02" textLength="5.4" lengthAdjust="spacingAndGlyphs" >Ex</text>
<path d="M15.4,393 H21.6 M18.5,389.8 V396.2" stroke="#a0a0a0" stroke-width="0.45"/>
<path d="M26.8,389.6 V396.6 M29.0,389.6 V396.6 M31.2,389.6 V396.6" stroke="#0f9040" stroke-width="1.0" stroke-dasharray="1.5 0.45"/>
<path d="M36.6,391 L42,395.6" stroke="#333" stroke-width="0.5"/>
<rect x="35.85" y="390.25" width="1.5" height="1.5" fill="#0a8a3a" />
<rect x="41.25" y="394.85" width="1.5" height="1.5" fill="#0a8a3a" />
<rect x="39.45" y="395.45" width="1.5" height="1.5" fill="#0a8a3a" />
<path d="M46.4,390.6 L53,396" stroke="#333" stroke-width="0.5"/>
<rect x="45.9" y="390.1" width="1.4" height="1.4" fill="#0a8a3a" />
<rect x="48.099999999999994" y="391.7" width="1.4" height="1.4" fill="#0a8a3a" />
<rect x="50.3" y="393.7" width="1.4" height="1.4" fill="#0a8a3a" />
<rect x="49.3" y="395.7" width="1.4" height="1.4" fill="#0a8a3a" />
<rect x="47.3" y="389.5" width="1.4" height="1.4" fill="#0a8a3a" />
<path d="M57.4,396 L63,390.4 M58.6,391.6 L62.6,395.6" stroke="#444" stroke-width="0.45" stroke-dasharray="1.4 0.6"/>
<rect x="56.9" y="395.3" width="1.4" height="1.4" fill="#0a8a3a" />
<rect x="59.9" y="392.90000000000003" width="1.4" height="1.4" fill="#0a8a3a" />
<path d="M68.2,390.4 L73.8,395.8 M68.6,394.6 L72.6,391" stroke="#444" stroke-width="0.45"/>
<rect x="70.1" y="392.1" width="1.8" height="1.8" fill="#0a8a3a" />
<path d="M77.6,390.6 L83.6,395.8 M83.4,390.4 L77.8,396 M77,393.2 H84" stroke="#444" stroke-width="0.4" stroke-dasharray="1.4 0.5"/>
<rect x="79.94999999999999" y="392.55" width="1.3" height="1.3" fill="#0a8a3a" />
<rect x="77.55" y="390.55" width="1.3" height="1.3" fill="#0a8a3a" />
<rect x="82.35" y="394.55" width="1.3" height="1.3" fill="#0a8a3a" />
<path d="M88.4,390.4 L93.6,395.6 M93.6,390.4 L88.4,395.6" stroke="#444" stroke-width="0.45"/>
<rect x="90.4" y="392.4" width="1.2" height="1.2" fill="#0a8a3a" />
<line x1="97.3" y1="389" x2="97.3" y2="397.6" stroke="#d4d4d4" stroke-width="0.5" />
<path d="M100.4,393 H106.2" stroke="#2fd06a" stroke-width="0.8"/>
<rect x="102.60000000000001" y="392.4" width="1.2" height="1.2" fill="#0a8a3a" />
<path d="M113,390 V396.4" stroke="#2fd06a" stroke-width="0.8"/>
<rect x="112.4" y="391.0" width="1.2" height="1.2" fill="#0a8a3a" />
<rect x="112.4" y="394.0" width="1.2" height="1.2" fill="#0a8a3a" />
<path d="M120.6,393 H126.8 M123.7,389.8 V396.2" stroke="#2fd06a" stroke-width="0.75"/>
<line x1="130" y1="389" x2="130" y2="397.6" stroke="#d4d4d4" stroke-width="0.5" />
<path d="M133.4,394.6 L137,391 L138.8,392.6 L135.2,396 Z" fill="#fafafa" stroke="#333" stroke-width="0.4"/>
<rect x="136.9" y="390.90000000000003" width="1.4" height="1.4" fill="#0a8a3a" />
<rect x="143.2" y="389.8" width="2.6" height="3.0" fill="#111" rx="0.8"/>
<rect x="144.6" y="392.2" width="3.0" height="3.4" fill="#fafafa" rx="0.8" stroke="#333" stroke-width="0.4"/>
<path d="M147.6,394.2 L149.8,393 L149.4,395.6 Z" fill="#0a8a3a"/>
<line x1="153.4" y1="389" x2="153.4" y2="397.6" stroke="#d4d4d4" stroke-width="0.5" />
<rect x="166.6" y="388.6" width="9.0" height="9.0" fill="#cde6f7" stroke="#99cdf0" stroke-width="0.35"/>
<rect x="157.7" y="390.2" width="5.8" height="4.4" fill="#fafafa" rx="0.5" stroke="#111" stroke-width="0.6"/>
<rect x="159.0" y="394.8" width="3.2" height="1.3" fill="#111" />
<rect x="157.7" y="390.2" width="1.1" height="4.4" fill="#14e05a" />
<rect x="168.1" y="390.2" width="5.8" height="4.4" fill="#fafafa" rx="0.5" stroke="#111" stroke-width="0.6"/>
<rect x="169.4" y="394.8" width="3.2" height="1.3" fill="#111" />
<rect x="168.7" y="390.8" width="4.6" height="3.2" fill="#dfe9f1" />
<rect x="178.4" y="390.2" width="5.8" height="4.4" fill="#fafafa" rx="0.5" stroke="#111" stroke-width="0.6"/>
<rect x="179.70000000000002" y="394.8" width="3.2" height="1.3" fill="#111" />
<rect x="178.4" y="390.2" width="5.8" height="1.1" fill="#14e05a" />
<rect x="188.4" y="390.2" width="5.8" height="4.4" fill="#fafafa" rx="0.5" stroke="#111" stroke-width="0.6"/>
<rect x="189.70000000000002" y="394.8" width="3.2" height="1.3" fill="#111" />
<rect x="188.4" y="393.4" width="5.8" height="1.2" fill="#14e05a" />
<rect x="198.6" y="390.2" width="5.8" height="4.4" fill="#fafafa" rx="0.5" stroke="#111" stroke-width="0.6"/>
<rect x="199.9" y="394.8" width="3.2" height="1.3" fill="#111" />
<rect x="199.9" y="391.2" width="3.2" height="2.2" fill="#14e05a" />
<line x1="208" y1="389" x2="208" y2="397.6" stroke="#d4d4d4" stroke-width="0.5" />
<path d="M212.3,393.2 H216.1 M214.20000000000002,391.3 V395.1" stroke="#111" stroke-width="1.0"/>
<rect x="216.70000000000002" y="389.6" width="3.0" height="6.8" fill="#d6d6d6" stroke="#bdbdbd" stroke-width="0.3"/>
<path d="M222.4,393.2 H226.2 M224.3,391.3 V395.1" stroke="#111" stroke-width="1.0"/>
<rect x="226.8" y="389.6" width="3.0" height="6.8" fill="#bfe8cc" stroke="#bdbdbd" stroke-width="0.3"/>
<rect x="228.9" y="390.0" width="0.9" height="6.2" fill="#35d878" />
<text x="1.6" y="405.0" font-size="5.02" fill="#1a1a1a" stroke="#1a1a1a" stroke-width="0.02" textLength="38.2" lengthAdjust="spacingAndGlyphs" >375.5747 , 328.8884</text>
<text x="1.6" y="411.8" font-size="5.02" fill="#1a1a1a" stroke="#1a1a1a" stroke-width="0.02" textLength="28.6" lengthAdjust="spacingAndGlyphs" >499.2234 &lt; 41°</text>
<line x1="43.6" y1="400" x2="43.6" y2="413.4" stroke="#dcdcdc" stroke-width="0.4" />
<circle cx="48.0" cy="403.0" r="1.3" fill="none" stroke="#333" stroke-width="0.5"/>
<circle cx="48.0" cy="403.0" r="0.35" fill="#444"/>
<circle cx="48.0" cy="409.8" r="1.3" fill="none" stroke="#333" stroke-width="0.5"/>
<circle cx="48.0" cy="409.8" r="0.35" fill="#444"/>
<text x="53.0" y="405.0" font-size="5.02" fill="#1a1a1a" stroke="#1a1a1a" stroke-width="0.02" textLength="38.2" lengthAdjust="spacingAndGlyphs" >375.5747 , 328.8884</text>
<text x="53.0" y="411.8" font-size="5.02" fill="#1a1a1a" stroke="#1a1a1a" stroke-width="0.02" textLength="28.6" lengthAdjust="spacingAndGlyphs" >499.2234 &lt; 41°</text>
<line x1="92.0" y1="400" x2="92.0" y2="413.4" stroke="#dcdcdc" stroke-width="0.4" />
<path d="M123.8,403.6 L125.2,404.8 L127.6,401.8" fill="none" stroke="#333" stroke-width="0.4"/>
<path d="M127.4,402.6 C127.4,399.8 131.4,399.8 131.4,402.4" fill="none" stroke="#333" stroke-width="0.4"/>
<rect x="127.6" y="402.6" width="7.2" height="11.0" fill="#fdfdfd" rx="1.6" stroke="#222" stroke-width="0.5"/>
<line x1="127.6" y1="406.8" x2="134.8" y2="406.8" stroke="#777" stroke-width="0.4" />
<rect x="129.8" y="403.0" width="2.6" height="3.4" fill="#14e05a" />
<line x1="166.0" y1="400" x2="166.0" y2="413.4" stroke="#dcdcdc" stroke-width="0.4" />
<text x="166.6" y="405.0" font-size="5.02" fill="#1a1a1a" stroke="#1a1a1a" stroke-width="0.02" textLength="15.2" lengthAdjust="spacingAndGlyphs" >Selected</text>
<text x="182.3" y="405.0" font-size="5.02" fill="#1a1a1a" stroke="#1a1a1a" stroke-width="0.02" textLength="22.8" lengthAdjust="spacingAndGlyphs" >Total Length</text>
<text x="206.9" y="405.0" font-size="5.02" fill="#1a1a1a" stroke="#1a1a1a" stroke-width="0.02" textLength="25.0" lengthAdjust="spacingAndGlyphs" >Current Layer</text>
<text x="236.4" y="405.0" font-size="5.02" fill="#1a1a1a" stroke="#1a1a1a" stroke-width="0.02" textLength="20.6" lengthAdjust="spacingAndGlyphs" >Grid Status</text>
<text x="166.6" y="411.8" font-size="5.02" fill="#1a1a1a" stroke="#1a1a1a" stroke-width="0.02" >0</text>
<text x="182.3" y="411.8" font-size="5.02" fill="#1a1a1a" stroke="#1a1a1a" stroke-width="0.02" >0</text>
<text x="206.9" y="411.8" font-size="5.02" fill="#1a1a1a" stroke="#1a1a1a" stroke-width="0.02" >0</text>
<text x="236.4" y="411.8" font-size="5.02" fill="#1a1a1a" stroke="#1a1a1a" stroke-width="0.02" textLength="15.2" lengthAdjust="spacingAndGlyphs" >10 / 100</text>
<line x1="234.6" y1="400" x2="234.6" y2="413.4" stroke="#dcdcdc" stroke-width="0.4" />
<line x1="259.8" y1="400" x2="259.8" y2="413.4" stroke="#dcdcdc" stroke-width="0.4" />
</svg>
</body></html>
